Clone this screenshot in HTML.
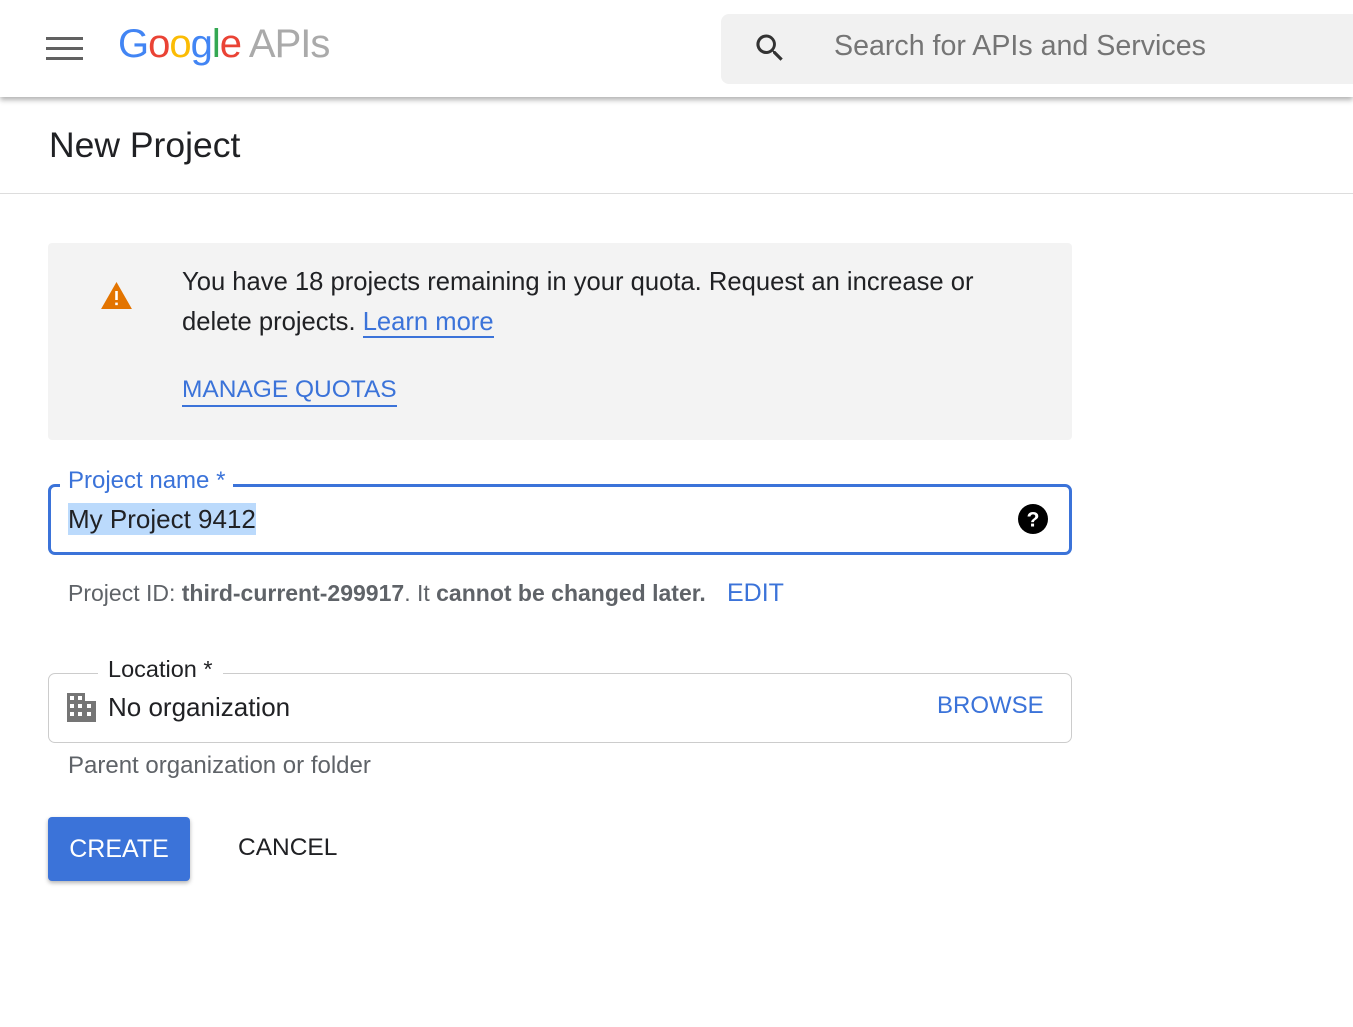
<!DOCTYPE html>
<html><head><style>
body{margin:0;width:1353px;height:1027px;background:#fff;font-family:"Liberation Sans",Arial,sans-serif;position:relative;overflow:hidden}
.a{position:absolute}
</style></head><body>
<div class="a" style="left:0;top:0;width:1353px;height:1px;background:#ddd"></div>
<div class="a" style="left:0;top:0;width:1353px;height:97px;background:#fff;box-shadow:0 3px 5px rgba(0,0,0,.3)"></div>
<div class="a" style="left:46px;top:37px;width:37px;height:3px;background:#616161"></div>
<div class="a" style="left:46px;top:47px;width:37px;height:3px;background:#616161"></div>
<div class="a" style="left:46px;top:57px;width:37px;height:3px;background:#616161"></div>
<div class="a" style="left:118px;top:22px;font-size:40px;letter-spacing:-1px"><span style="color:#4285f4">G</span><span style="color:#ea4335">o</span><span style="color:#fbbc05">o</span><span style="color:#4285f4">g</span><span style="color:#34a853">l</span><span style="color:#ea4335">e</span> <span style="color:#aaa">APIs</span></div>
<div class="a" style="left:721px;top:14px;width:640px;height:70px;background:#f1f1f1;border-radius:8px"></div>
<svg class="a" style="left:752px;top:30px" width="36" height="36" viewBox="0 0 24 24"><path fill="#333" d="M15.5 14h-.8l-.3-.3A6.5 6.5 0 1 0 9.5 16a6.5 6.5 0 0 0 4.2-1.6l.3.3v.8l5 5 1.5-1.5-5-5zm-6 0A4.5 4.5 0 1 1 14 9.5 4.5 4.5 0 0 1 9.5 14z"/></svg>
<div class="a" style="left:834px;top:30px;font-size:28.6px;color:#757575">Search for APIs and Services</div>
<div class="a" style="left:49px;top:125px;font-size:35.5px;color:#202124">New Project</div>
<div class="a" style="left:0;top:193px;width:1353px;height:1px;background:#ddd"></div>
<div class="a" style="left:48px;top:243px;width:1024px;height:197px;background:#f3f3f3;border-radius:4px"></div>
<svg class="a" style="left:101px;top:282px" width="31" height="27" viewBox="0 0 24 21"><path fill="#e37400" d="M12 0 24 21H0z"/><rect x="11" y="7" width="2" height="7" fill="#fff"/><rect x="11" y="16" width="2" height="2" fill="#fff"/></svg>
<div class="a" style="left:182px;top:262px;font-size:25.6px;line-height:40px;color:#202124;width:860px">You have 18 projects remaining in your quota. Request an increase or delete projects. <span style="color:#3b73d9;border-bottom:2px solid #3b73d9">Learn more</span></div>
<div class="a" style="left:182px;top:375px;font-size:24.5px;color:#3b73d9;border-bottom:2px solid #3b73d9;line-height:30px">MANAGE QUOTAS</div>
<div class="a" style="left:48px;top:484px;width:1018px;height:65px;border:3px solid #3b73d9;border-radius:7px"></div>
<div class="a" style="left:60px;top:467px;background:#fff;padding:0 8px;font-size:24px;color:#3b73d9">Project name *</div>
<div class="a" style="left:68px;top:503px;background:#bbdafc;font-size:26px;color:#202124;height:32px;line-height:32px">My Project 9412</div>
<svg class="a" style="left:1018px;top:504px" width="30" height="30" viewBox="0 0 24 24"><circle cx="12" cy="12" r="12" fill="#000"/><text x="12" y="18" text-anchor="middle" fill="#fff" font-size="17" font-weight="bold" font-family="Liberation Sans">?</text></svg>
<div class="a" style="left:68px;top:580px;font-size:23px;color:#5f6368">Project ID: <b>third-current-299917</b>. It <b>cannot be changed later.</b></div>
<div class="a" style="left:727px;top:579px;font-size:25px;color:#3b73d9">EDIT</div>
<div class="a" style="left:48px;top:673px;width:1022px;height:68px;border:1px solid #ccc;border-radius:7px"></div>
<div class="a" style="left:98px;top:656px;background:#fff;padding:0 10px;font-size:23.5px;color:#202124">Location *</div>
<svg class="a" style="left:67px;top:693px" width="29" height="29" viewBox="0 0 29 29"><path fill="#757575" d="M0 0h18v8h11v21H0z"/><g fill="#fff"><rect x="3" y="3" width="4" height="4"/><rect x="11" y="3" width="4" height="4"/><rect x="3" y="11" width="4" height="4"/><rect x="11" y="11" width="4" height="4"/><rect x="3" y="19" width="4" height="4"/><rect x="11" y="19" width="4" height="4"/><rect x="20" y="11" width="4" height="4"/><rect x="20" y="19" width="4" height="4"/></g></svg>
<div class="a" style="left:108px;top:692px;font-size:26px;color:#202124">No organization</div>
<div class="a" style="left:937px;top:692px;font-size:24px;color:#3b73d9">BROWSE</div>
<div class="a" style="left:68px;top:752px;font-size:24px;color:#5f6368">Parent organization or folder</div>
<div class="a" style="left:48px;top:817px;width:142px;height:64px;background:#3b73d9;border-radius:4px;box-shadow:0 2px 4px rgba(0,0,0,.3);color:#fff;font-size:25px;line-height:64px;text-align:center">CREATE</div>
<div class="a" style="left:238px;top:834px;font-size:24.5px;color:#202124">CANCEL</div>
</body></html>
